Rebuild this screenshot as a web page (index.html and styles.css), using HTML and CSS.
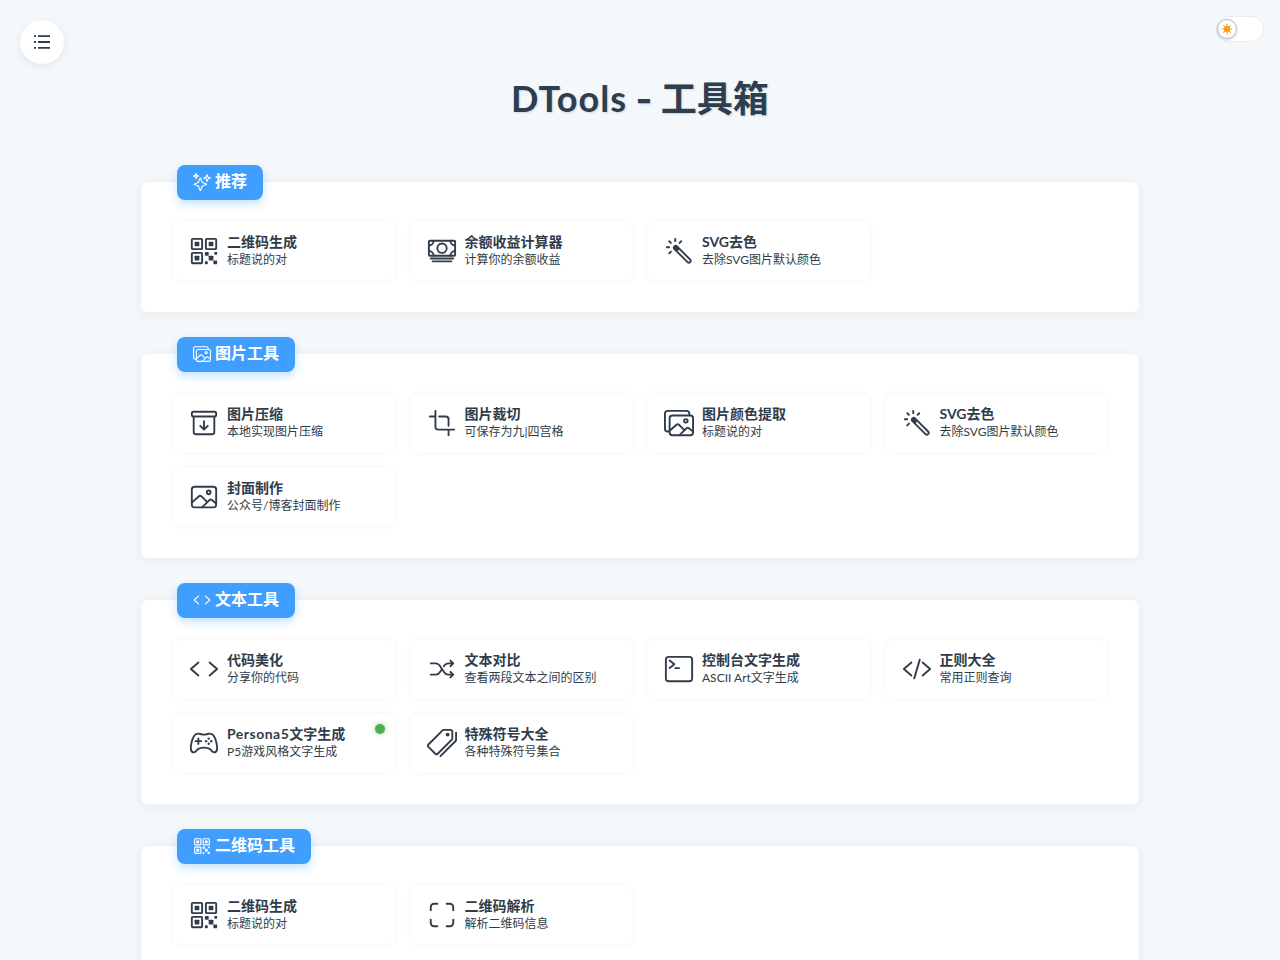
FILE: index.html
```html
<!doctype html>
<html lang="zh-CN">
<head>
  <meta charset="utf-8" />
  <meta name="viewport" content="width=device-width,initial-scale=1" />
  <title>DTools - 工具箱</title>
  <link rel="stylesheet" href="styles.css">
</head>
<body>
  <!-- icon set -->
  <svg class="sprite" aria-hidden="true">
    <symbol id="i-qr" viewBox="0 0 512 512">
      <g class="solid"><rect x="336" y="336" width="80" height="80" rx="8"/><rect x="272" y="272" width="64" height="64" rx="8"/><rect x="416" y="416" width="64" height="64" rx="8"/><rect x="432" y="272" width="48" height="48" rx="8"/><rect x="272" y="432" width="48" height="48" rx="8"/><rect x="336" y="96" width="80" height="80" rx="8"/><rect x="96" y="96" width="80" height="80" rx="8"/><rect x="96" y="336" width="80" height="80" rx="8"/></g>
      <rect x="288" y="48" width="176" height="176" rx="16"/><rect x="48" y="48" width="176" height="176" rx="16"/><rect x="48" y="288" width="176" height="176" rx="16"/>
    </symbol>
    <symbol id="i-cash" viewBox="0 0 512 512">
      <rect x="32" y="80" width="448" height="256" rx="16"/><path d="M64 384h384M96 432h320"/><circle cx="256" cy="208" r="80"/>
      <path d="M480 160a80 80 0 0 1-80-80M32 160a80 80 0 0 0 80-80M480 256a80 80 0 0 0-80 80M32 256a80 80 0 0 1 80 80"/>
    </symbol>
    <symbol id="i-wand" viewBox="0 0 512 512">
      <rect x="280.48" y="122.9" width="63.03" height="378.2" rx="31.52" transform="rotate(-45 312 312)"/>
      <path class="solid" d="M178.38 178.38a31.64 31.64 0 0 0 0 44.75L223.25 268 268 223.25l-44.87-44.87a31.64 31.64 0 0 0-44.75 0z"/>
      <path d="M48 192h40M90.18 90.18l28.28 28.28M192 48v40M293.82 90.18l-28.28 28.28M118.46 265.54l-28.28 28.28"/>
    </symbol>
    <symbol id="i-archive" viewBox="0 0 512 512">
      <path d="M80 152v256a40 40 0 0 0 40 40h272a40 40 0 0 0 40-40V152"/><rect x="48" y="64" width="416" height="80" rx="28"/><path d="M320 304l-64 64-64-64M256 346V224"/>
    </symbol>
    <symbol id="i-crop" viewBox="0 0 512 512">
      <path d="M144 48v272a48 48 0 0 0 48 48h272M368 304V192a48 48 0 0 0-48-48H208M368 368v96M144 144H48"/>
    </symbol>
    <symbol id="i-images" viewBox="0 0 512 512">
      <path d="M432 112V96a48 48 0 0 0-48-48H64a48 48 0 0 0-48 48v256a48 48 0 0 0 48 48h16"/><rect x="96" y="128" width="400" height="336" rx="46"/><circle cx="373" cy="219.6" r="30.6"/>
      <path d="M342.15 372.17L255 285.78a30.93 30.93 0 0 0-42.18-1.21L96 387.64M265.23 464l118.59-117.73a31 31 0 0 1 41.46-1.87L496 402.91"/>
    </symbol>
    <symbol id="i-image" viewBox="0 0 512 512">
      <rect x="48" y="80" width="416" height="352" rx="48"/><circle cx="336" cy="176" r="32"/>
      <path d="M304 335.79l-90.66-90.49a32 32 0 0 0-43.87-1.3L48 352M224 432l123.34-123.34a32 32 0 0 1 43.11-2L464 368"/>
    </symbol>
    <symbol id="i-code" viewBox="0 0 512 512">
      <path d="M160 368L32 256l128-112M352 368l128-112-128-112"/>
    </symbol>
    <symbol id="i-slash" viewBox="0 0 512 512">
      <path d="M160 368L32 256l128-112M352 368l128-112-128-112M304 96l-96 320"/>
    </symbol>
    <symbol id="i-shuffle" viewBox="0 0 512 512">
      <path d="M400 304l48 48-48 48M400 112l48 48-48 48M64 352h85.19a80 80 0 0 0 66.56-35.62L256 256M64 160h85.19a80 80 0 0 1 66.56 35.62l80.5 120.76A80 80 0 0 0 362.81 352H416M416 160h-53.19a80 80 0 0 0-66.56 35.62L288 208"/>
    </symbol>
    <symbol id="i-terminal" viewBox="0 0 512 512">
      <rect x="32" y="48" width="448" height="416" rx="48"/><path d="M96 112l80 64-80 64M192 240h64"/>
    </symbol>
    <symbol id="i-game" viewBox="0 0 512 512">
      <path d="M467.51 248.83c-18.4-83.18-45.69-136.24-89.43-149.17A91.5 91.5 0 0 0 352 96c-26.89 0-48.11 16-96 16s-69.15-16-96-16a99.09 99.09 0 0 0-27.2 3.66C89 112.59 61.94 165.7 43.33 248.83c-19 84.91-15.56 152 21.58 164.88 26 9 49.25-9.61 71.27-37 25-31.2 55.79-40.8 119.82-40.8s93.62 9.6 118.66 40.8c22 27.41 46.11 45.79 71.42 37.16 41.02-14.01 40.44-79.13 21.43-165.04zM160 176v96M208 224h-96"/>
      <g class="solid"><circle cx="292" cy="224" r="20"/><circle cx="336" cy="268" r="20"/><circle cx="336" cy="180" r="20"/><circle cx="380" cy="224" r="20"/></g>
    </symbol>
    <symbol id="i-tags" viewBox="0 0 512 512">
      <path d="M403.29 32H280.36a14.46 14.46 0 0 0-10.2 4.2L24.4 281.9a28.85 28.85 0 0 0 0 40.7l117 117a28.86 28.86 0 0 0 40.71 0L427.8 194a14.46 14.46 0 0 0 4.2-10.2V60.8A28.66 28.66 0 0 0 403.29 32zM230 480l262-262a13.81 13.81 0 0 0 4-10V80"/>
      <circle class="solid" cx="352" cy="112" r="32"/>
    </symbol>
    <symbol id="i-scan" viewBox="0 0 512 512">
      <path d="M336 448h56a56 56 0 0 0 56-56v-56M448 176v-56a56 56 0 0 0-56-56h-56M176 448h-56a56 56 0 0 1-56-56v-56M64 176v-56a56 56 0 0 1 56-56h56"/>
    </symbol>
    <symbol id="i-sparkles" viewBox="0 0 512 512">
      <path d="M259.92 262.91L216.4 149.77a9 9 0 0 0-16.8 0l-43.52 113.14a9 9 0 0 1-5.17 5.17L37.77 311.6a9 9 0 0 0 0 16.8l113.14 43.52a9 9 0 0 1 5.17 5.17l43.52 113.14a9 9 0 0 0 16.8 0l43.52-113.14a9 9 0 0 1 5.17-5.17l113.14-43.52a9 9 0 0 0 0-16.8l-113.14-43.52a9 9 0 0 1-5.17-5.17zM108 68L88 16 68 68 16 88l52 20 20 52 20-52 52-20zM426.67 117.33L400 48l-26.67 69.33L304 144l69.33 26.67L400 240l26.67-69.33L496 144z"/>
    </symbol>
  </svg>

  <button class="menu-btn" type="button" aria-label="菜单">
    <svg class="menu-icon" viewBox="0 0 20 20"><path d="M2 4.2h2M6 4.2h12M2 10h2M6 10h12M2 15.8h2M6 15.8h12"/></svg>
  </button>
  <button class="switch" type="button" aria-label="主题">
    <span class="knob"><svg class="sun" viewBox="0 0 20 20"><circle cx="10" cy="10" r="4.2"/><path d="M10 1v18M1 10h18M3.8 3.8l12.4 12.4M16.2 3.8L3.8 16.2"/></svg></span>
  </button>

  <main class="container">
    <h1><span class="brand">DTools</span><span class="dash"> - </span>工具箱</h1>

    <section class="group">
      <h2 class="group-title"><svg class="icon"><use href="#i-sparkles"/></svg>推荐</h2>
      <div class="tools">
        <a class="tool"><svg class="icon"><use href="#i-qr"/></svg><div><h3>二维码生成</h3><p>标题说的对</p></div></a>
        <a class="tool"><svg class="icon"><use href="#i-cash"/></svg><div><h3>余额收益计算器</h3><p>计算你的余额收益</p></div></a>
        <a class="tool"><svg class="icon"><use href="#i-wand"/></svg><div><h3>SVG去色</h3><p>去除SVG图片默认颜色</p></div></a>
      </div>
    </section>

    <section class="group">
      <h2 class="group-title"><svg class="icon"><use href="#i-images"/></svg>图片工具</h2>
      <div class="tools">
        <a class="tool"><svg class="icon"><use href="#i-archive"/></svg><div><h3>图片压缩</h3><p>本地实现图片压缩</p></div></a>
        <a class="tool"><svg class="icon"><use href="#i-crop"/></svg><div><h3>图片裁切</h3><p>可保存为九|四宫格</p></div></a>
        <a class="tool"><svg class="icon"><use href="#i-images"/></svg><div><h3>图片颜色提取</h3><p>标题说的对</p></div></a>
        <a class="tool"><svg class="icon"><use href="#i-wand"/></svg><div><h3>SVG去色</h3><p>去除SVG图片默认颜色</p></div></a>
        <a class="tool"><svg class="icon"><use href="#i-image"/></svg><div><h3>封面制作</h3><p>公众号/博客封面制作</p></div></a>
      </div>
    </section>

    <section class="group">
      <h2 class="group-title"><svg class="icon"><use href="#i-code"/></svg>文本工具</h2>
      <div class="tools">
        <a class="tool"><svg class="icon"><use href="#i-code"/></svg><div><h3>代码美化</h3><p>分享你的代码</p></div></a>
        <a class="tool"><svg class="icon"><use href="#i-shuffle"/></svg><div><h3>文本对比</h3><p>查看两段文本之间的区别</p></div></a>
        <a class="tool"><svg class="icon"><use href="#i-terminal"/></svg><div><h3>控制台文字生成</h3><p>ASCII Art文字生成</p></div></a>
        <a class="tool"><svg class="icon"><use href="#i-slash"/></svg><div><h3>正则大全</h3><p>常用正则查询</p></div></a>
        <a class="tool"><svg class="icon"><use href="#i-game"/></svg><div><h3><span class="latin">Persona5</span>文字生成</h3><p>P5游戏风格文字生成</p></div><span class="dot"></span></a>
        <a class="tool"><svg class="icon"><use href="#i-tags"/></svg><div><h3>特殊符号大全</h3><p>各种特殊符号集合</p></div></a>
      </div>
    </section>

    <section class="group">
      <h2 class="group-title"><svg class="icon"><use href="#i-qr"/></svg>二维码工具</h2>
      <div class="tools">
        <a class="tool"><svg class="icon"><use href="#i-qr"/></svg><div><h3>二维码生成</h3><p>标题说的对</p></div></a>
        <a class="tool"><svg class="icon"><use href="#i-scan"/></svg><div><h3>二维码解析</h3><p>解析二维码信息</p></div></a>
      </div>
    </section>
  </main>
</body>
</html>
```
FILE: styles.css
```css
:root{
  --bg:#f5f8fb;
  --card:#ffffff;
  --primary:#409eff;
  --text:#2c3e50;
  --ink:#303c49;
}
*{box-sizing:border-box}
html,body{height:100%;margin:0}
body{background:var(--bg);color:var(--ink);font-family:Lato,"Noto Sans CJK SC",sans-serif;overflow:hidden}
h1,h2,h3,p{margin:0}
.sprite{position:absolute;width:0;height:0}
.icon{flex:none;fill:none;stroke:currentColor;stroke-width:32;stroke-linecap:round;stroke-linejoin:round}
.solid{fill:currentColor;stroke:none}

/* floating controls */
.menu-btn{
  position:absolute;left:20px;top:20px;width:44px;height:44px;padding:0;border:0;border-radius:50%;
  display:flex;align-items:center;justify-content:center;background:#fff;box-shadow:0 2px 8px rgba(0,0,0,0.08);
}
.menu-icon{width:20px;height:20px;fill:none;stroke:var(--ink);stroke-width:1.8}
.switch{
  position:absolute;right:16px;top:16px;width:48px;height:26px;padding:2px 0;border:1px solid #e8ecf1;border-radius:13px;
  display:flex;align-items:center;background:#fff;
}
.knob{
  width:20px;height:20px;border:1px solid #b9b9b9;border-radius:50%;background:#fff;
  display:flex;align-items:center;justify-content:center;box-shadow:0 1px 3px rgba(0,0,0,0.15);
}
.sun{width:12px;height:12px;fill:#f5a019;stroke:#f5a019;stroke-width:1.8}

.container{width:1000px;margin:0 auto;padding-top:71px}
h1{
  height:54px;line-height:54px;margin-bottom:56px;text-align:center;font-size:36px;font-weight:700;
  color:var(--text);text-shadow:1px 1px 2px rgba(0,0,0,0.15);
}
.brand{letter-spacing:1px}
.dash{font-family:Inter,sans-serif}
.latin{letter-spacing:0.5px}

.group{
  position:relative;margin-bottom:40px;padding:40px 32px 32px;border:1px solid #f0f2f5;border-radius:8px;
  background:var(--card);box-shadow:0 2px 12px rgba(0,0,0,0.05);
}
.group-title{
  position:absolute;left:36px;top:-17px;height:35px;padding:0 16px 3px;border-radius:8px;
  display:flex;align-items:center;gap:4px;background:var(--primary);color:#fff;
  font-size:16px;line-height:24px;font-weight:700;box-shadow:0 4px 10px rgba(64,158,255,0.3);
}
.group-title .icon{width:18px;height:18px;margin-top:1px}

.tools{display:grid;grid-template-columns:repeat(4,1fr);gap:16px}
.tool{
  position:relative;height:58px;padding:0 16px;border-radius:8px;
  display:flex;align-items:center;gap:8px;background:#fff;box-shadow:0 0 6px rgba(0,0,0,0.05);
}
.tool .icon{width:30px;height:30px}
.tool div{padding-bottom:2px}
.tool h3{font-size:14px;line-height:18px;font-weight:700;white-space:nowrap}
.tool p{font-size:12px;line-height:17px;white-space:nowrap}
.dot{
  position:absolute;right:10px;top:10px;width:10px;height:10px;border-radius:50%;
  background:#4caf50;box-shadow:0 0 4px rgba(76,175,80,0.6);
}
```
